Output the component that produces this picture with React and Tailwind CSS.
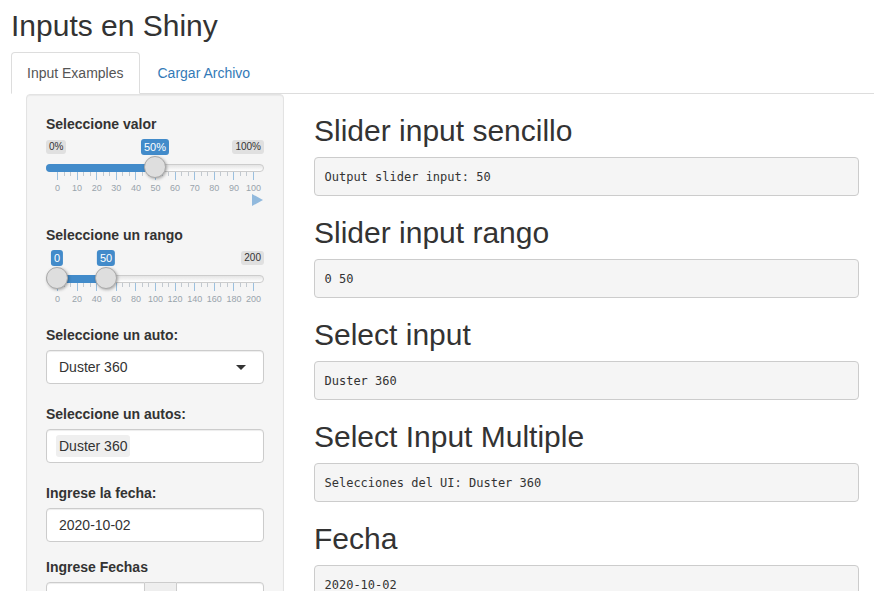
import React from "react";

const outputs = [
  { title: "Slider input sencillo", text: "Output slider input: 50" },
  { title: "Slider input rango", text: "0 50" },
  { title: "Select input", text: "Duster 360" },
  { title: "Select Input Multiple", text: "Selecciones del UI: Duster 360" },
  { title: "Fecha", text: "2020-10-02" },
];

// ion.rangeSlider, shiny skin
function Slider({ max, values, suffix = "", play = false }) {
  const pos = (v) => 11 + (v / max) * 196;
  const range = values.length === 2;
  const barLeft = range ? pos(values[0]) : 0;
  const barRight = pos(values[values.length - 1]);
  const big = Array.from({ length: 11 }, (_, i) => i);

  return (
    <div className={`relative w-full ${play ? "h-[71px]" : "h-[60px]"}`}>
      {!range && (
        <span className="absolute left-0 top-[1px] rounded-[3px] bg-[#e0e0e0] px-[3px] py-[1px] text-[10px] leading-[12px] text-[#333]">
          0{suffix}
        </span>
      )}
      <span className="absolute right-0 top-[1px] rounded-[3px] bg-[#e0e0e0] px-[3px] py-[1px] text-[10px] leading-[12px] text-[#333]">
        {max}
        {suffix}
      </span>
      {values.map((v) => (
        <span
          key={v}
          className="absolute top-0 -translate-x-1/2 rounded-[3px] bg-[#428bca] px-[3px] py-[1px] text-[11px] leading-[14px] text-white"
          style={{ left: pos(v) }}
        >
          {v}
          {suffix}
        </span>
      ))}

      <div className="absolute left-0 right-0 top-[25px] h-[8px] rounded-[16px] border border-[#ccc] bg-linear-to-b from-[#e4e4e4] to-white" />
      <div
        className={`absolute top-[25px] h-[8px] bg-[#428bca] ${range ? "" : "rounded-l-[16px]"}`}
        style={{ left: barLeft, width: barRight - barLeft }}
      />

      {big.map((i) => (
        <React.Fragment key={i}>
          <span className="absolute top-[33px] h-[8px] w-px bg-[#9bc0df]" style={{ left: pos((i * max) / 10) }} />
          {i > 0 &&
            [1, 2].map((z) => (
              <span
                key={z}
                className="absolute top-[33px] h-[4px] w-px bg-[#c2c9d0]"
                style={{ left: pos(((i - z / 3) * max) / 10) }}
              />
            ))}
          <span
            className="absolute top-[44px] -translate-x-1/2 text-[9px] leading-[10px] text-[#99a4ac]"
            style={{ left: pos((i * max) / 10) + 0.5 }}
          >
            {(i * max) / 10}
          </span>
        </React.Fragment>
      ))}

      {values.map((v) => (
        <div
          key={v}
          className="absolute top-[17px] h-[22px] w-[22px] rounded-full border border-[#aaa] bg-[#dedede] shadow-[1px_1px_3px_rgba(0,0,0,0.3)]"
          style={{ left: pos(v) - 11 }}
        />
      ))}

      {play && (
        <svg className="absolute right-[1px] top-[55px]" width="11" height="12" viewBox="0 0 11 12">
          <path d="M0 0 L11 6 L0 12 Z" fill="#91b9dd" />
        </svg>
      )}
    </div>
  );
}

function Label({ children }) {
  return <label className="mb-[5px] block text-[14px] font-bold leading-[20px] text-[#333]">{children}</label>;
}

const inputBox =
  "h-[34px] rounded-[4px] border border-[#ccc] bg-white shadow-[inset_0_1px_1px_rgba(0,0,0,0.075)]";

export default function App() {
  return (
    <div
      className="h-[591px] overflow-hidden bg-white pl-[11px] pr-[9px] text-[14px] leading-[20px] text-[#333]"
      style={{ fontFamily: '"Liberation Sans", Arial, sans-serif' }}
    >
      <h2 className="mb-[10px] pt-[9px] text-[30px] font-normal leading-[33px]">Inputs en Shiny</h2>

      {/* Tabs */}
      <ul className="flex border-b border-[#ddd]">
        <li className="-mb-px mr-[2px]">
          <a className="block rounded-t-[4px] border border-[#ddd] border-b-white bg-white px-[15px] py-[10px] text-[#555]">
            Input Examples
          </a>
        </li>
        <li className="-mb-px mr-[2px]">
          <a className="block rounded-t-[4px] border border-transparent px-[15px] py-[10px] text-[#337ab7]">
            Cargar Archivo
          </a>
        </li>
      </ul>

      <div className="flex">
        {/* Sidebar */}
        <div className="w-[288px] shrink-0 px-[15px]">
          <div className="rounded-[4px] border border-[#e3e3e3] bg-[#f5f5f5] p-[19px] shadow-[inset_0_1px_1px_rgba(0,0,0,0.05)]">
            <div className="mb-[15px]">
              <Label>Seleccione valor</Label>
              <Slider max={100} values={[50]} suffix="%" play />
            </div>

            <div className="mb-[15px]">
              <Label>Seleccione un rango</Label>
              <Slider max={200} values={[0, 50]} />
            </div>

            <div className="mb-[20px]">
              <Label>Seleccione un auto:</Label>
              <div className={`${inputBox} flex items-center justify-between pl-[12px] pr-[17px]`}>
                <span>Duster 360</span>
                <span className="h-0 w-0 border-x-[5px] border-t-[5px] border-x-transparent border-t-[#333]" />
              </div>
            </div>

            <div className="mb-[20px]">
              <Label>Seleccione un autos:</Label>
              <div className={`${inputBox} pl-[9px] pt-[5px]`}>
                <span className="inline-block rounded-[3px] bg-[#efefef] px-[3px] py-[1px] leading-[20px]">
                  Duster 360
                </span>
              </div>
            </div>

            <div className="mb-[15px]">
              <Label>Ingrese la fecha:</Label>
              <div className={`${inputBox} flex items-center px-[12px]`}>2020-10-02</div>
            </div>

            <div className="mb-[15px]">
              <Label>Ingrese Fechas</Label>
              <div className="flex">
                <div className={`${inputBox} w-[99px] rounded-r-none`} />
                <div className="h-[34px] w-[31px] border-y border-[#ccc] bg-[#eee]" />
                <div className={`${inputBox} flex-1 rounded-l-none`} />
              </div>
            </div>
          </div>
        </div>

        {/* Main panel */}
        <div className="min-w-0 flex-1 px-[15px]">
          {outputs.map((o) => (
            <div key={o.title}>
              <h2 className="mb-[10px] mt-[20px] text-[30px] font-normal leading-[33px]">{o.title}</h2>
              <pre
                className="mb-[10px] rounded-[4px] border border-[#ccc] bg-[#f5f5f5] px-[9.5px] py-[9.5px] text-[12px] leading-[18px] text-[#333]"
                style={{ fontFamily: '"DejaVu Sans Mono", "Liberation Mono", monospace' }}
              >
                {o.text}
              </pre>
            </div>
          ))}
        </div>
      </div>
    </div>
  );
}
